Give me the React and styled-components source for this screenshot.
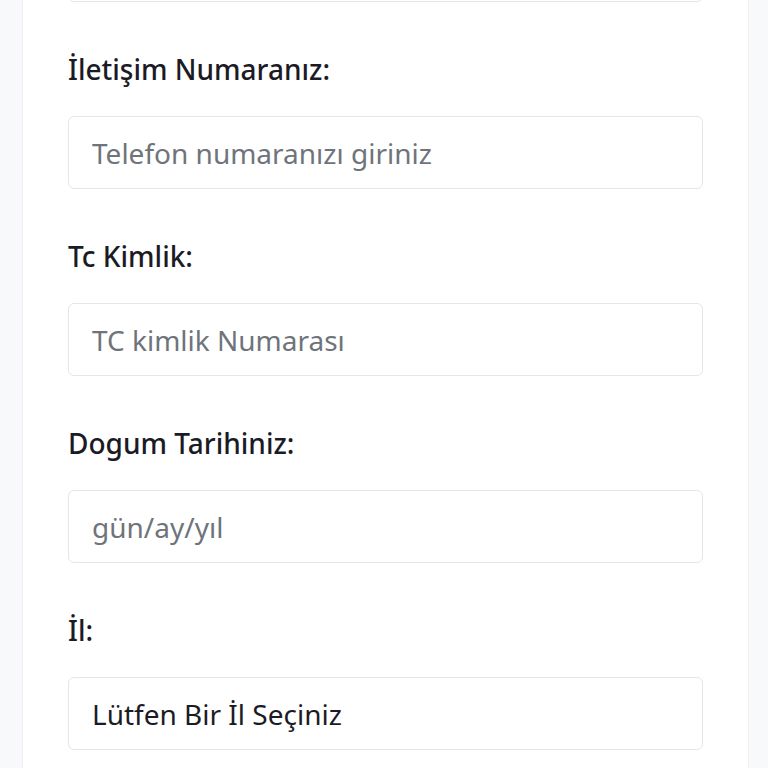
import styled, { createGlobalStyle } from 'styled-components';

const GlobalStyle = createGlobalStyle`
    html, body {
        margin: 0;
        padding: 0;
        background: #f8f9fa;
        font-family: "Noto Sans", "Open Sans", sans-serif;
        overflow: hidden;
    }
`;

const Page = styled.div`
    display: flex;
    justify-content: center;
    padding: 0 19px 0 22px;
    margin-top: -71px;
`;

const Card = styled.form`
    flex: 1;
    background: #fff;
    border-left: 1px solid #eef0f2;
    border-right: 1px solid #eef0f2;
    padding: 0 45px;
    display: flex;
    flex-direction: column;
`;

const Field = styled.div`
    display: flex;
    flex-direction: column;
    margin-bottom: 46px;
`;

const Label = styled.label`
    display: block;
    font-size: 28px;
    line-height: 42px;
    font-weight: 500;
    color: #1b1b26;
    margin-bottom: 26px;
`;

const Input = styled.input`
    box-sizing: border-box;
    height: 73px;
    width: 100%;
    border: 1px solid #e4e6e9;
    border-radius: 6px;
    padding: 0 23px;
    font-family: inherit;
    font-size: 28px;
    color: #212529;
    background: #fff;
    outline: none;

    &::placeholder {
        color: #6f747b;
    }
`;

const Select = styled.select`
    box-sizing: border-box;
    height: 73px;
    width: 100%;
    border: 1px solid #e4e6e9;
    border-radius: 6px;
    padding: 0 23px;
    font-family: inherit;
    font-size: 28px;
    color: #1b1b26;
    background: #fff;
    appearance: none;
    outline: none;
`;

const fields = [
    { id: 'prev', label: null, placeholder: '' },
    { id: 'tel', label: 'İletişim Numaranız:', placeholder: 'Telefon numaranızı giriniz' },
    { id: 'tc', label: 'Tc Kimlik:', placeholder: 'TC kimlik Numarası' },
    { id: 'dogum', label: 'Dogum Tarihiniz:', placeholder: 'gün/ay/yıl' },
];

export default function App() {
    return <>
        <GlobalStyle />
        <Page>
            <Card>
                {fields.map(f => (
                    <Field key={f.id}>
                        {f.label && <Label htmlFor={f.id}>{f.label}</Label>}
                        <Input id={f.id} placeholder={f.placeholder} />
                    </Field>
                ))}
                <Field>
                    <Label htmlFor="il">İl:</Label>
                    <Select id="il" defaultValue="">
                        <option value="">Lütfen Bir İl Seçiniz</option>
                    </Select>
                </Field>
            </Card>
        </Page>
    </>
}
